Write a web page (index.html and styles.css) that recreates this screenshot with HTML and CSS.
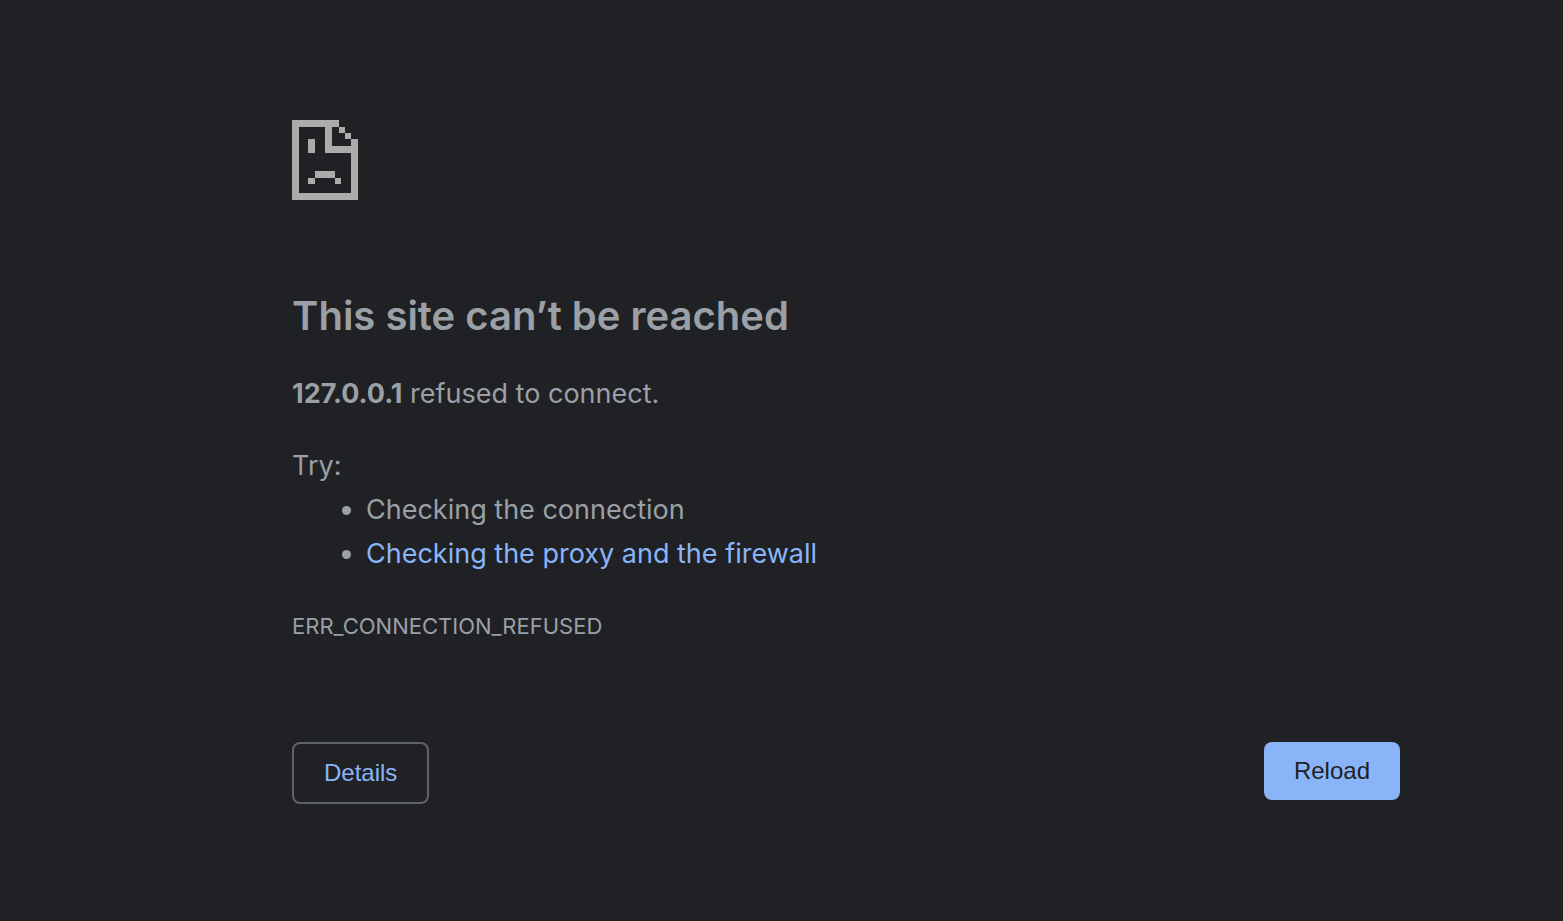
FILE: index.html
```html
<!DOCTYPE html>
<html lang="en">
<head>
  <meta charset="UTF-8">
  <meta name="viewport" content="width=device-width, initial-scale=1.0">
  <title>127.0.0.1</title>
  <link rel="stylesheet" href="styles.css">
</head>
<body>
  <main class="error-page">
    <svg class="error-icon" viewBox="0 0 200 241" preserveAspectRatio="none" shape-rendering="crispEdges" aria-hidden="true">
      <!-- page outline and folded corner -->
      <path d="M0 0H141V20H121V78H180V58H200V241H0ZM20 20V221H180V98H101V20Z" fill-rule="evenodd"/>
      <path d="M141 20H160V39H141ZM160 39H180V58H160Z"/>
      <!-- eye and mouth -->
      <path d="M49 58H69V98H49ZM69 155H129V175H69ZM49 175H69V194H49ZM129 175H149V194H129Z"/>
    </svg>

    <h1>This site can’t be reached</h1>
    <p><strong>127.0.0.1</strong> refused to connect.</p>

    <div class="suggestions">
      <p>Try:</p>
      <ul>
        <li>Checking the connection</li>
        <li><a href="#buttons">Checking the proxy and the firewall</a></li>
      </ul>
    </div>

    <div class="error-code">ERR_CONNECTION_REFUSED</div>

    <div class="buttons" id="buttons">
      <button type="button" class="details-button">Details</button>
      <button type="button" class="reload-button">Reload</button>
    </div>
  </main>
</body>
</html>
```

FILE: styles.css
```css
body {
  margin: 0;
  background-color: #202124;
  color: #9aa0a6;
  font-family: Inter, "Noto Sans", sans-serif;
  font-size: 27px;
  line-height: 44px;
}

.error-page {
  padding: 120px 163px 0 292px;
}

.error-icon {
  display: block;
  width: 66px;
  height: 80px;
  fill: #ababaa;
}

h1 {
  margin: 88px 0 28px;
  font-size: 40px;
  font-weight: 600;
  line-height: 56px;
}

p {
  margin: 0;
}

strong {
  font-weight: 700;
}

.suggestions {
  margin-top: 28px;
}

ul {
  margin: 0;
  padding-left: 74px;
}

a {
  color: #8ab4f8;
  text-decoration: none;
}

.error-code {
  margin-top: 28px;
  font-size: 22px;
}

.buttons {
  display: flex;
  justify-content: space-between;
  align-items: flex-start;
  margin-top: 94px;
}

button {
  padding: 14px 30px;
  border: none;
  border-radius: 8px;
  font-family: "Liberation Sans", Arial, sans-serif;
  font-size: 24px;
  line-height: 30px;
  cursor: pointer;
}

.details-button {
  border: 2px solid #5f6368;
  background-color: transparent;
  color: #8ab4f8;
}

.reload-button {
  background-color: #8ab4f8;
  color: #202124;
}
```
